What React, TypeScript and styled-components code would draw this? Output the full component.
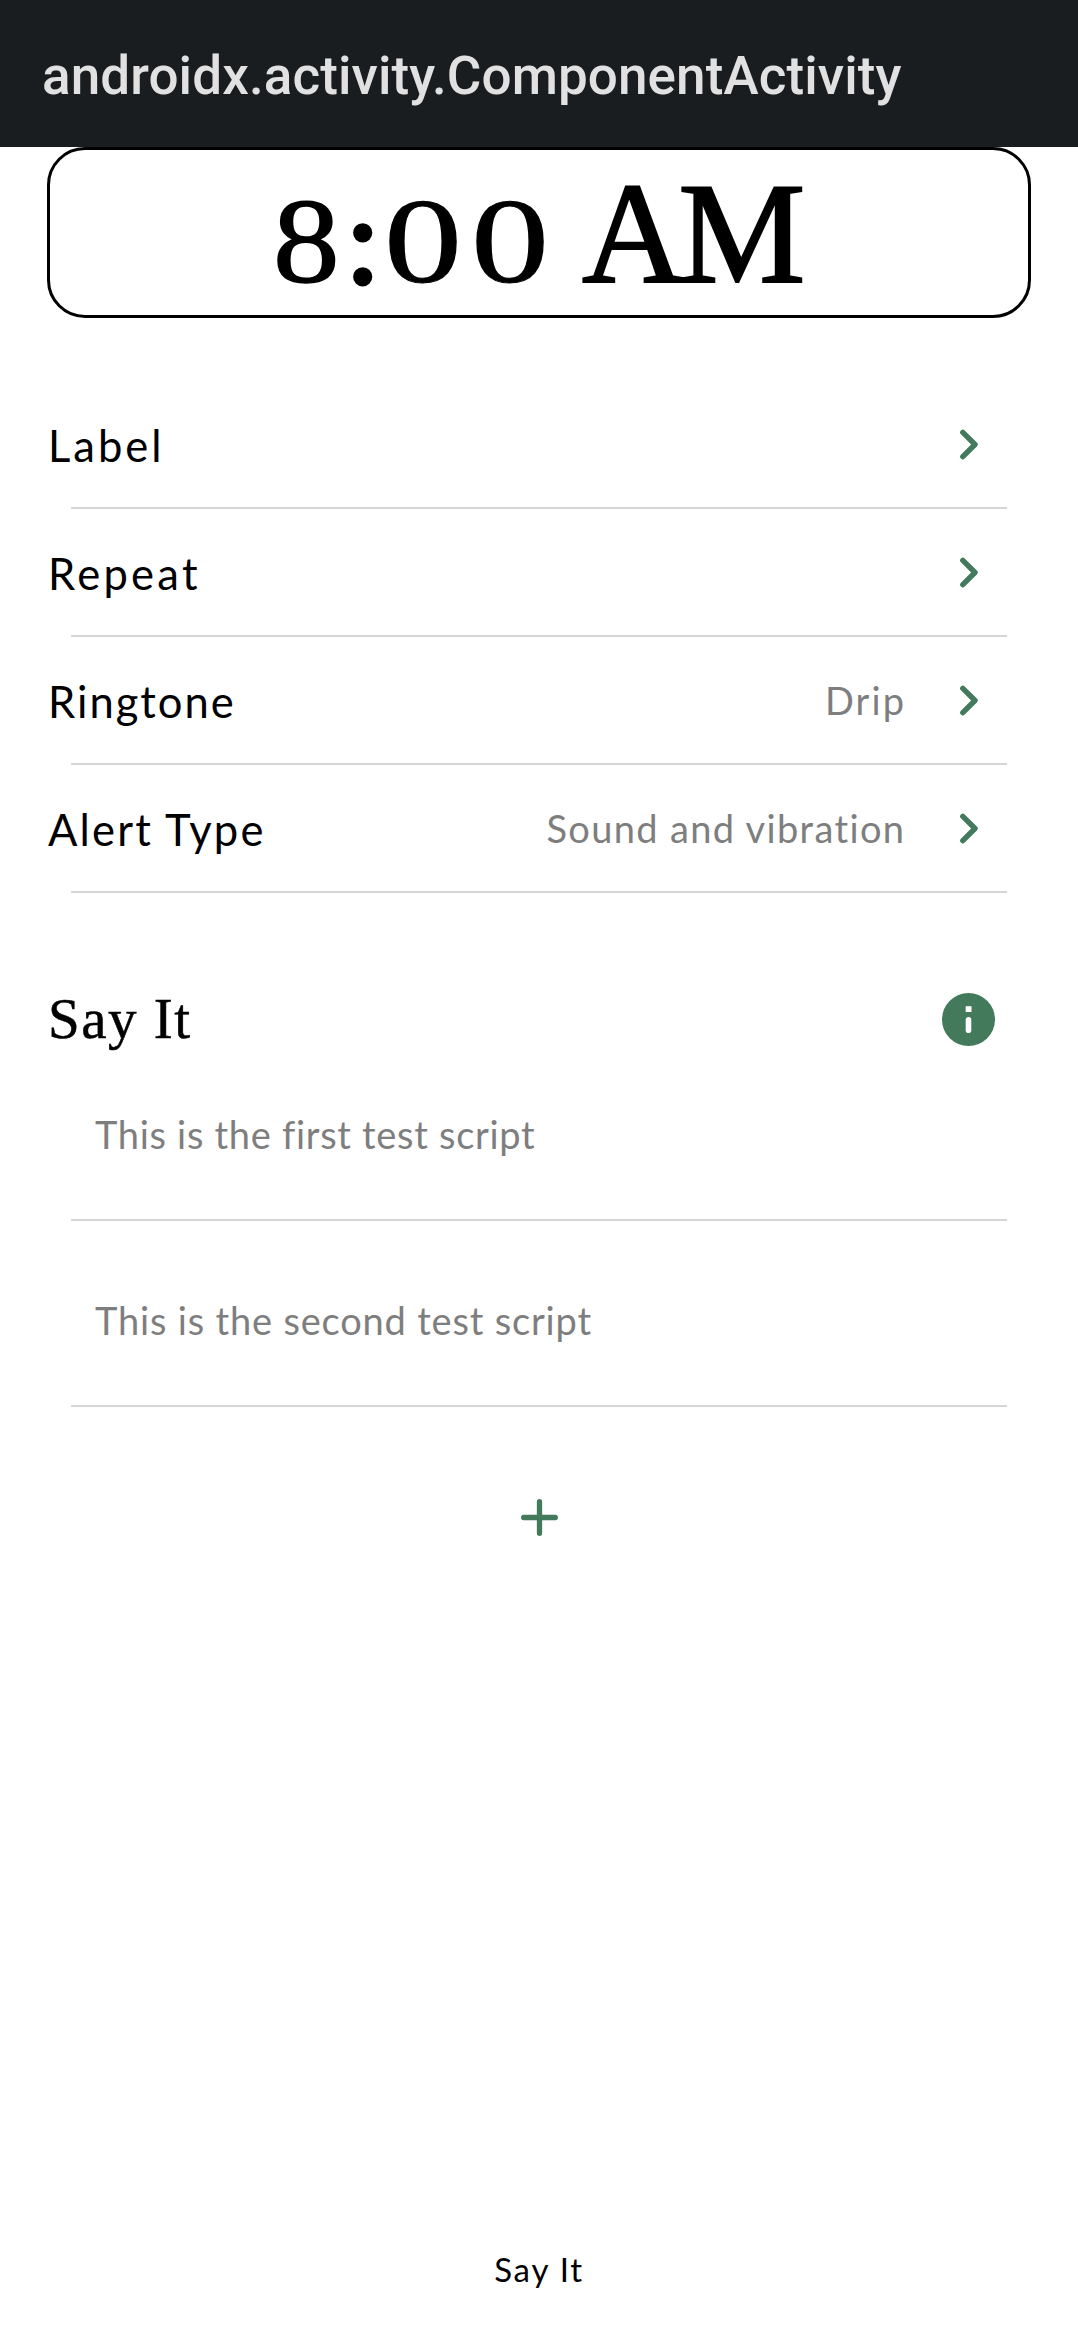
import React from "react";
import styled, { createGlobalStyle } from "styled-components";

const GREEN = "#437a5b";
const SANS = `Lato, "Open Sans", sans-serif`;
const SERIF = `"Liberation Serif", "Times New Roman", serif`;

const GlobalStyle = createGlobalStyle`
  *, *::before, *::after { box-sizing: border-box; }
  body { margin: 0; background: #fff; }
`;

const Screen = styled.div`
  display: flex;
  flex-direction: column;
  width: 1078px;
  height: 2338px;
  background: #fff;
  color: #000;
  font-family: ${SANS};
`;

const AppBar = styled.header`
  display: flex;
  align-items: center;
  height: 147px;
  padding: 0 42px;
  background: #1a1d1f;
`;

const AppTitle = styled.h1`
  margin: 0;
  padding-top: 5px;
  font: 500 53px/64px Roboto, sans-serif;
  letter-spacing: 0.1px;
  color: #e1e1e1;
`;

const TimeBox = styled.button`
  display: flex;
  align-items: baseline;
  height: 171px;
  margin: 0 47px;
  padding: 0 0 0 223px;
  border: 3px solid #000;
  border-radius: 38px;
  background: #fff;
  color: #000;
  font-family: ${SERIF};
  line-height: 168px;
  text-align: left;
`;

const Digit = styled.span<{ $advance: number; $stretch: number; $stroke: number }>`
  width: ${(p) => p.$advance}px;
  font-size: 121px;
  transform: scaleX(${(p) => p.$stretch});
  transform-origin: left;
  -webkit-text-stroke: ${(p) => p.$stroke}px #000;
`;

const Period = styled.span`
  font-size: 143px;
  letter-spacing: -7px;
  -webkit-text-stroke: 2px #000;
`;

const Settings = styled.section`
  display: flex;
  flex-direction: column;
  padding-top: 63px;
`;

const Divider = styled.div`
  height: 2px;
  margin: 0 71px;
  background: #d6d6d6;
`;

const Row = styled.div`
  display: flex;
  align-items: center;
  height: 126px;
  padding: 0 88px 0 48px;
`;

const RowLabel = styled.span<{ $track: number }>`
  flex: 1;
  padding-top: 1px;
  font-size: 43.5px;
  line-height: 56px;
  letter-spacing: ${(p) => p.$track}px;
`;

const RowValue = styled.span<{ $track: number }>`
  margin-right: ${(p) => 43 - p.$track}px;
  font-size: 38px;
  line-height: 56px;
  letter-spacing: ${(p) => p.$track}px;
  color: #7e7e7e;
`;

const RowIcon = styled.svg`
  display: block;
  width: 42px;
  height: 42px;
  margin-right: 1px;
  fill: none;
  stroke: ${GREEN};
  stroke-width: 5.4;
  stroke-linecap: round;
  stroke-linejoin: round;
`;

const SectionHeader = styled.div`
  display: flex;
  align-items: center;
  justify-content: space-between;
  height: 80px;
  margin-top: 86px;
  padding: 0 83px 0 48px;
`;

const SectionTitle = styled.h2`
  margin: 0;
  font: 400 57px/66px ${SERIF};
  letter-spacing: 1.5px;
  -webkit-text-stroke: 0.5px #000;
`;

const InfoIcon = styled.svg`
  display: block;
  width: 53px;
  height: 53px;
`;

const ScriptList = styled.div`
  display: flex;
  flex-direction: column;
  gap: 69px;
  padding: 45px 71px 0;
`;

const Script = styled.div<{ $track: number }>`
  height: 117px;
  padding-left: 24px;
  border-bottom: 2px solid #d6d6d6;
  font-size: 38px;
  line-height: 60px;
  letter-spacing: ${(p) => p.$track}px;
  color: #7e7e7e;
`;

const AddButton = styled.button`
  display: flex;
  align-self: center;
  align-items: center;
  justify-content: center;
  width: 60px;
  height: 60px;
  margin-top: 80px;
  padding: 0;
  border: 0;
  background: none;
`;

const Footer = styled.footer`
  margin-top: auto;
  padding-bottom: 46px;
  font-size: 33px;
  line-height: 46px;
  letter-spacing: 1.8px;
  text-align: center;
`;

const timeGlyphs = [
  { glyph: "8", advance: 73, stretch: 1.1, stroke: 1.5 },
  { glyph: ":", advance: 38, stretch: 1, stroke: 5 },
  { glyph: "0", advance: 87, stretch: 1.29, stroke: 1 },
  { glyph: "0", advance: 111, stretch: 1.29, stroke: 1 },
];

const settings = [
  { label: "Label", value: "", track: 3, valueTrack: 0 },
  { label: "Repeat", value: "", track: 3.3, valueTrack: 0 },
  { label: "Ringtone", value: "Drip", track: 2, valueTrack: 2.1 },
  { label: "Alert Type", value: "Sound and vibration", track: 2.2, valueTrack: 1.35 },
];

const scripts = [
  { text: "This is the first test script", track: 0.7 },
  { text: "This is the second test script", track: 0.82 },
];

export default function App() {
  return (
    <Screen>
      <GlobalStyle />
      <AppBar>
        <AppTitle>androidx.activity.ComponentActivity</AppTitle>
      </AppBar>
      <TimeBox>
        {timeGlyphs.map((g, i) => (
          <Digit key={i} $advance={g.advance} $stretch={g.stretch} $stroke={g.stroke}>
            {g.glyph}
          </Digit>
        ))}
        <Period>AM</Period>
      </TimeBox>
      <Settings>
        {settings.map((s) => (
          <React.Fragment key={s.label}>
            <Row>
              <RowLabel $track={s.track}>{s.label}</RowLabel>
              {s.value && <RowValue $track={s.valueTrack}>{s.value}</RowValue>}
              <RowIcon viewBox="0 0 42 42">
                <path d="M15.8 9.4 28 21.5 15.8 33.7" />
              </RowIcon>
            </Row>
            <Divider />
          </React.Fragment>
        ))}
      </Settings>
      <SectionHeader>
        <SectionTitle>Say It</SectionTitle>
        <InfoIcon viewBox="0 0 53 53">
          <circle cx="26.5" cy="26.5" r="26.5" fill={GREEN} />
          <rect x="23.7" y="13.2" width="5.8" height="5.8" fill="#fff" />
          <rect x="23.7" y="24" width="5.6" height="16" rx="2.8" fill="#fff" />
        </InfoIcon>
      </SectionHeader>
      <ScriptList>
        {scripts.map((s) => (
          <Script key={s.text} $track={s.track}>
            {s.text}
          </Script>
        ))}
      </ScriptList>
      <AddButton aria-label="Add script">
        <svg width="42" height="42" viewBox="0 0 42 42" fill="none" stroke={GREEN} strokeWidth="5.3" strokeLinecap="round">
          <path d="M21.5 5.7V37.3M5.7 21.5H37.3" />
        </svg>
      </AddButton>
      <Footer>Say It</Footer>
    </Screen>
  );
}
